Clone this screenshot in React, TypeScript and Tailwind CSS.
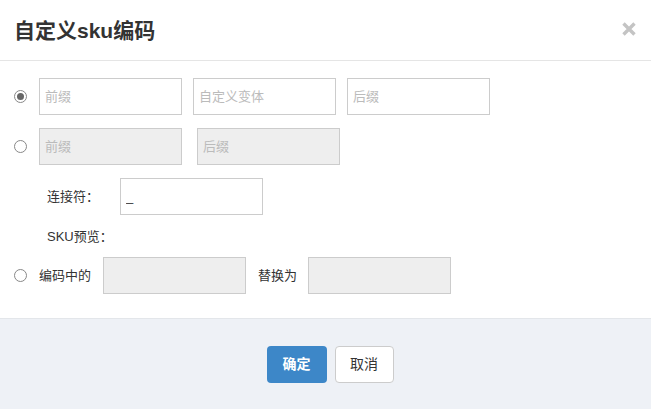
const font = { fontFamily: '"Liberation Sans", "Noto Sans CJK SC", sans-serif' };

function Radio({ checked }: { checked?: boolean }) {
  return (
    <span className="flex h-[13px] w-[13px] shrink-0 items-center justify-center rounded-full border border-[#888] bg-white">
      {checked && <span className="h-[7px] w-[7px] rounded-full bg-[#666]" />}
    </span>
  );
}

function Field({ placeholder, disabled, value }: { placeholder?: string; disabled?: boolean; value?: string }) {
  return (
    <input
      readOnly
      placeholder={placeholder}
      defaultValue={value}
      className={`h-[37px] w-[143px] border border-[#ccc] px-[5px] text-[13px] text-[#333] outline-none placeholder:text-[#bbb] ${
        disabled ? "bg-[#eee]" : "bg-white"
      }`}
      style={font}
    />
  );
}

export default function App() {
  return (
    <div className="flex h-[409px] w-[651px] flex-col bg-white text-[13px] text-[#333]" style={font}>
      <div className="flex h-[61px] shrink-0 items-center justify-between border-b border-[#e5e5e5] pl-[14px] pr-[14px]">
        <h2 className="text-[21px] font-bold leading-none text-[#333]">自定义sku编码</h2>
        <svg width="16" height="16" viewBox="0 0 16 16" className="mt-[-2px]">
          <path d="M2.5 2.5L13.5 13.5M13.5 2.5L2.5 13.5" stroke="#c4c4c4" strokeWidth="3.4" />
        </svg>
      </div>

      <div className="flex flex-1 flex-col pl-[14px] pt-[17px]">
        <div className="flex items-center">
          <Radio checked />
          <div className="ml-[12px] flex gap-[11px]">
            <Field placeholder="前缀" />
            <Field placeholder="自定义变体" />
            <Field placeholder="后缀" />
          </div>
        </div>

        <div className="mt-[13px] flex items-center">
          <Radio />
          <div className="ml-[12px] flex gap-[15px]">
            <Field placeholder="前缀" disabled />
            <Field placeholder="后缀" disabled />
          </div>
        </div>

        <div className="mt-[13px] flex items-center pl-[33px]">
          <span className="w-[73px]">连接符：</span>
          <Field value="_" />
        </div>

        <div className="mt-[13px] pl-[33px] leading-[17px]">SKU预览：</div>

        <div className="mt-[12px] flex items-center">
          <Radio />
          <span className="ml-[12px]">编码中的</span>
          <span className="ml-[12px]">
            <Field disabled />
          </span>
          <span className="ml-[12px] w-[50px]">替换为</span>
          <Field disabled />
        </div>
      </div>

      <div className="flex h-[91px] shrink-0 items-center justify-center gap-[8px] border-t border-[#e3e6ea] bg-[#eef1f6] pl-[9px]">
        <button className="h-[37px] w-[60px] rounded-[4px] bg-[#3d87c8] text-[14px] font-bold text-white">确定</button>
        <button className="h-[37px] w-[59px] rounded-[4px] border border-[#ccc] bg-white text-[14px] text-[#333]">取消</button>
      </div>
    </div>
  );
}
